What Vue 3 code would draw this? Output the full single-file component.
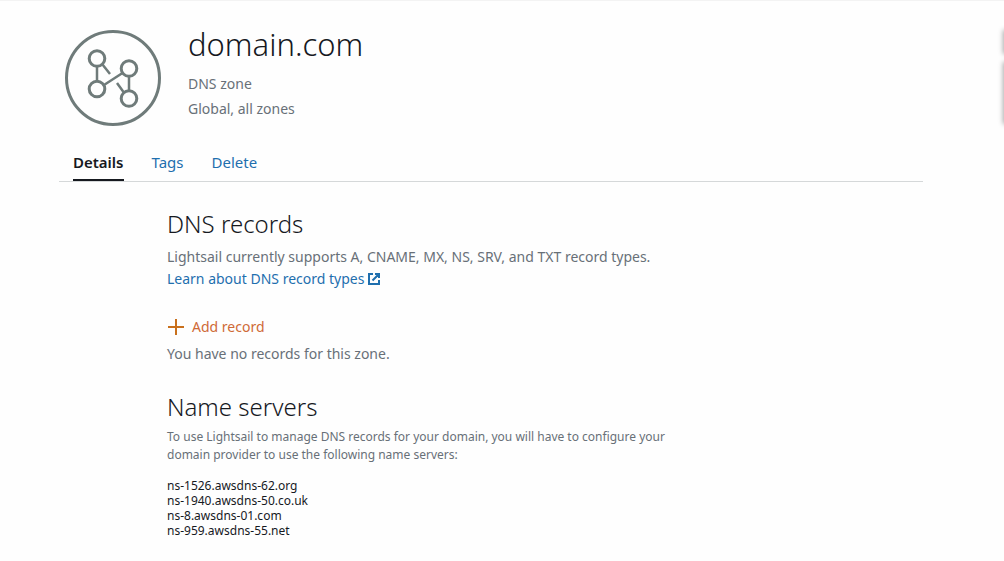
<script setup>
import { ref } from 'vue'

const tabs = ['Details', 'Tags', 'Delete']
const active = ref('Details')
const servers = [
  'ns-1526.awsdns-62.org',
  'ns-1940.awsdns-50.co.uk',
  'ns-8.awsdns-01.com',
  'ns-959.awsdns-55.net',
]
</script>

<template>
  <div class="page">
    <header class="resource">
      <svg class="zone-icon" viewBox="0 0 96 96" fill="none" stroke="#6f7b7a" aria-hidden="true">
        <circle cx="48" cy="48" r="46.5" stroke-width="3" />
        <g stroke-width="3">
          <circle cx="32" cy="28.5" r="7.8" />
          <circle cx="64" cy="38.5" r="7.8" />
          <circle cx="32" cy="59" r="7.8" />
          <circle cx="64" cy="68.5" r="7.8" />
        </g>
        <path d="M32 36.5V51M64 46.5V60.5M39 55L57.500 43M37.500 34.500L45 44M52 53L58.500 62" stroke-width="2.500" />
      </svg>
      <div class="summary">
        <h1>domain.com</h1>
        <p>DNS zone</p>
        <p>Global, all zones</p>
      </div>
    </header>

    <nav class="tabs">
      <a
        v-for="tab in tabs"
        :key="tab"
        href="#"
        :class="{ active: tab === active }"
        @click.prevent="active = tab"
      >{{ tab }}</a>
    </nav>

    <main class="content">
      <section>
        <h2>DNS records</h2>
        <p class="body">Lightsail currently supports A, CNAME, MX, NS, SRV, and TXT record types.</p>
        <a class="learn" href="#">
          Learn about DNS record types
          <svg width="12" height="12" viewBox="0 0 12 12" fill="none" stroke="currentColor" stroke-width="2" aria-hidden="true">
            <path d="M5 1H1V11H11V7M7 1H11V5M11 1L4.500 7.500" />
          </svg>
        </a>
        <button class="add" type="button">
          <svg width="17" height="16" viewBox="0 0 17 16" fill="none" stroke="#c9701c" stroke-width="2" aria-hidden="true">
            <path d="M1 8H17M9 0V16" />
          </svg>
          Add record
        </button>
        <p class="body">You have no records for this zone.</p>
      </section>

      <section class="servers">
        <h2>Name servers</h2>
        <p class="note">To use Lightsail to manage DNS records for your domain, you will have to configure your domain provider to use the following name servers:</p>
        <ul>
          <li v-for="server in servers" :key="server">{{ server }}</li>
        </ul>
      </section>
    </main>

    <aside class="edge" aria-hidden="true">
      <span class="short"></span>
      <span class="tall"></span>
    </aside>
  </div>
</template>

<style>
body {
  margin: 0;
  background: #fefefe;
}
</style>

<style scoped>
.page {
  position: relative;
  overflow: hidden;
  box-sizing: border-box;
  min-height: 100vh;
  padding: 24px 81px 20px 59px;
  border-top: 1px solid #f3f3f3;
  color: #16191f;
  font-family: "Noto Sans", "Open Sans", sans-serif;
}
h1, h2, p, ul {
  margin: 0;
  padding: 0;
}
a {
  color: #1f6fae;
  text-decoration: none;
}
.resource {
  display: flex;
  gap: 27px;
  padding-left: 6px;
}
.zone-icon {
  flex: none;
  width: 96px;
  height: 96px;
  margin-top: 5px;
}
h1 {
  font-size: 31px;
  line-height: 38px;
  font-weight: 300;
  margin-bottom: 8px;
}
.summary p {
  font-size: 14px;
  line-height: 25px;
  color: #687078;
}
.tabs {
  display: flex;
  gap: 28px;
  margin-top: 23px;
  padding: 0 14px;
  border-bottom: 1px solid #d5d8d9;
}
.tabs a {
  font-size: 15px;
  line-height: 26px;
  padding-bottom: 4px;
  border-bottom: 2px solid transparent;
}
.tabs .active {
  color: #16191f;
  font-weight: 600;
  border-bottom-color: #16191f;
}
.content {
  padding: 25px 0 0 108px;
}
h2 {
  font-size: 24px;
  line-height: 34px;
  font-weight: 300;
}
.body {
  font-size: 14px;
  line-height: 22px;
  color: #687078;
}
h2 + .body {
  margin-top: 5px;
}
.learn {
  display: flex;
  width: fit-content;
  align-items: center;
  gap: 4px;
  font-size: 14px;
  line-height: 22px;
}
.add {
  display: flex;
  align-items: center;
  gap: 8px;
  margin: 26px 0 5px;
  padding: 0;
  border: 0;
  background: none;
  color: #cf6a37;
  font: 14px/22px "Noto Sans", "Open Sans", sans-serif;
  cursor: pointer;
}
.servers {
  margin-top: 25px;
}
.note {
  max-width: 520px;
  margin-top: 4px;
  font-size: 12px;
  line-height: 18px;
  color: #687078;
}
ul {
  margin-top: 14px;
  list-style: none;
  font-size: 12px;
  line-height: 15px;
}
.edge {
  position: absolute;
  top: 30px;
  right: -8px;
  width: 8px;
}
.edge span {
  display: block;
  box-shadow: 0 0 5px 1px #aaa;
}
.short {
  height: 22px;
}
.tall {
  height: 60px;
  margin-top: 10px;
}
</style>
